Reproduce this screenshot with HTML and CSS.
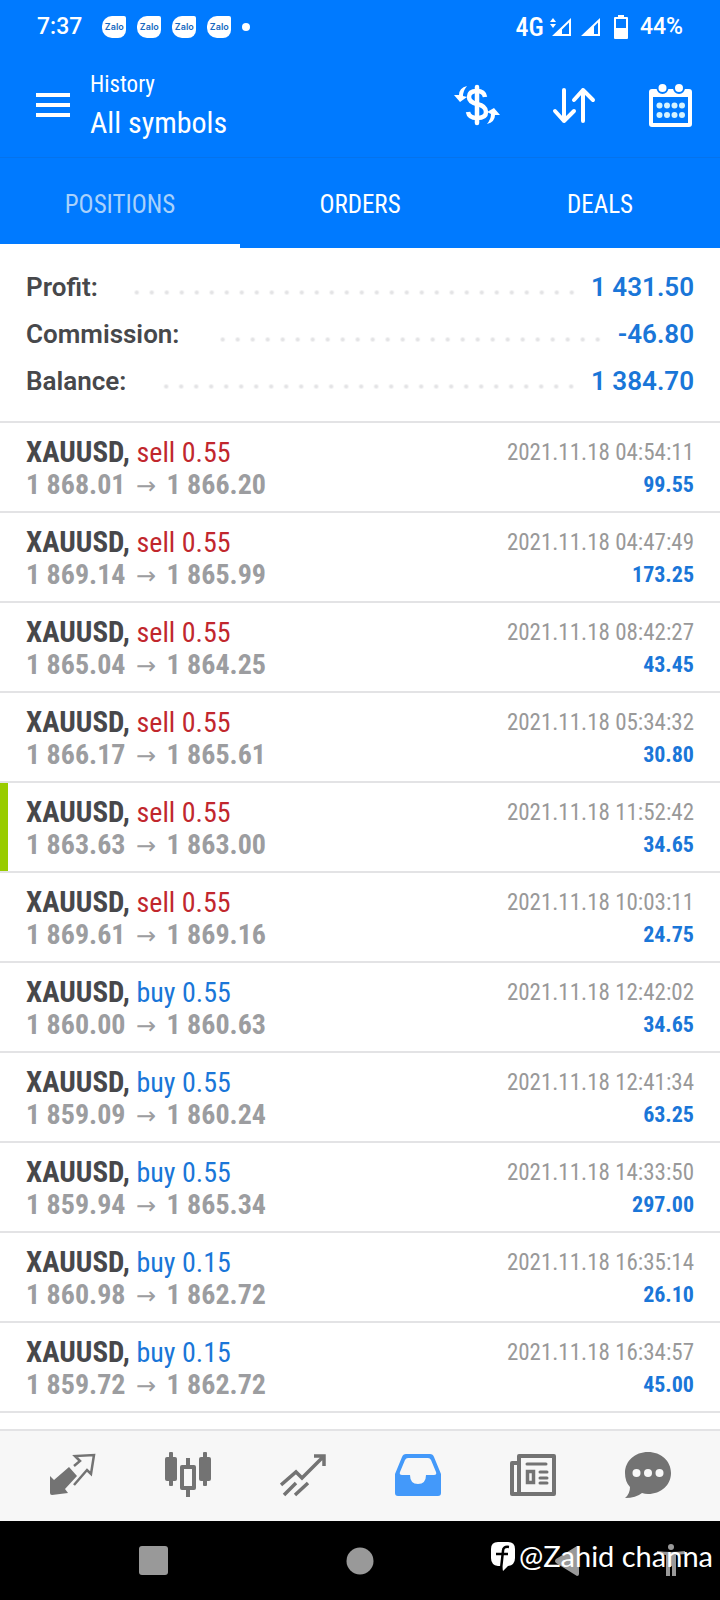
FILE: index.html
```html
<!DOCTYPE html>
<html lang="en">
<head>
<meta charset="utf-8">
<meta name="viewport" content="width=device-width, initial-scale=1">
<title>History</title>
<link rel="stylesheet" href="styles.css">
</head>
<body>
<div class="app">
  <header class="header">
    <div class="status">
      <span class="clock">7:37</span>
      <span class="zalo">Zalo</span>
      <span class="zalo">Zalo</span>
      <span class="zalo">Zalo</span>
      <span class="zalo">Zalo</span>
      <span class="dot"></span>
      <span class="network">4G</span>
      <svg class="signal" width="22" height="20" viewBox="0 0 22 20" fill="#fff"><path d="M0 5l3-4 3 4zM0 7l3 4 3-4z"/><path d="M21 1v18H2zM19 5.500L12 12.500V17h7z" fill-rule="evenodd"/></svg>
      <svg class="signal-two" width="20" height="20" viewBox="0 0 20 20" fill="#fff"><path d="M19 1v18H0zM17 5.500L13 9.500V17h4z" fill-rule="evenodd"/></svg>
      <svg class="battery" width="16" height="26" viewBox="0 0 16 26" fill="#fff"><path d="M5 1h6v2h3q1 0 1 1v20q0 1-1 1H2q-1 0-1-1V4q0-1 1-1h3zM3 5v9h10V5z" fill-rule="evenodd"/></svg>
      <span class="charge">44%</span>
    </div>
    <div class="toolbar">
      <button class="icon-button" aria-label="Menu">
        <svg width="34" height="24" viewBox="0 0 34 24" fill="#fff"><path d="M0 0h34v4H0zM0 10h34v4H0zM0 20h34v4H0z"/></svg>
      </button>
      <div class="titles">
        <p class="kicker">History</p>
        <h1 class="title">All symbols</h1>
      </div>
      <div class="actions">
        <button class="icon-button" aria-label="Currency">
          <svg width="46" height="46" viewBox="0 0 46 46" fill="none" stroke="#fff" stroke-width="4.500">
            <path d="M31 15q-1-6-8-6-8 0-8 6 0 5 8 7 9 2 9 8 0 6-9 6-8 0-9-6" /><path d="M23 5v36" stroke-linecap="round"/>
            <path d="M13 4Q5 6 5 13L0 13l6 7 7-5-4-1q0-5 4-10zM33 42q8-2 8-9h5l-6-7-7 4 4 2q0 5-4 10z" fill="#fff" stroke="none"/>
          </svg>
        </button>
        <button class="icon-button" aria-label="Sort">
          <svg width="46" height="46" viewBox="0 0 46 46" fill="none" stroke="#fff" stroke-width="4" stroke-linecap="round" stroke-linejoin="round"><path d="M13 8v31M4 29l9 10 10-10M32 39V8M23 18L32 8l10 10"/></svg>
        </button>
        <button class="icon-button" aria-label="Choose period">
          <svg width="46" height="46" viewBox="0 0 46 46"><rect x="3" y="9" width="39" height="34" rx="1" fill="none" stroke="#fff" stroke-width="4"/><path d="M2 8h41v7H2z" fill="#fff"/><g fill="#fff" stroke="#007aff" stroke-width="2"><circle cx="14.500" cy="6" r="5"/><circle cx="31" cy="6" r="5"/></g><g fill="#d4f3ff"><circle cx="11.500" cy="23.500" r="3"/><circle cx="19" cy="23.500" r="3"/><circle cx="26.500" cy="23.500" r="3"/><circle cx="34" cy="23.500" r="3"/><circle cx="11.500" cy="33" r="3"/><circle cx="19" cy="33" r="3"/><circle cx="26.500" cy="33" r="3"/><circle cx="34" cy="33" r="3"/></g></svg>
        </button>
      </div>
    </div>
    <nav class="tabs">
      <button class="tab tab-active">POSITIONS</button>
      <button class="tab">ORDERS</button>
      <button class="tab">DEALS</button>
    </nav>
  </header>

  <main class="content">
    <dl class="summary">
      <div class="total"><dt>Profit:</dt><dd>1 431.50</dd></div>
      <div class="total"><dt>Commission:</dt><dd>-46.80</dd></div>
      <div class="total"><dt>Balance:</dt><dd>1 384.70</dd></div>
    </dl>
    <ul class="deals">
      <li class="deal"><div><p class="symbol">XAUUSD, <span class="sell">sell 0.55</span></p><p class="prices">1 868.01 <span class="arrow">→</span> 1 866.20</p></div><div class="result"><time>2021.11.18 04:54:11</time><p class="amount">99.55</p></div></li>
      <li class="deal"><div><p class="symbol">XAUUSD, <span class="sell">sell 0.55</span></p><p class="prices">1 869.14 <span class="arrow">→</span> 1 865.99</p></div><div class="result"><time>2021.11.18 04:47:49</time><p class="amount">173.25</p></div></li>
      <li class="deal"><div><p class="symbol">XAUUSD, <span class="sell">sell 0.55</span></p><p class="prices">1 865.04 <span class="arrow">→</span> 1 864.25</p></div><div class="result"><time>2021.11.18 08:42:27</time><p class="amount">43.45</p></div></li>
      <li class="deal"><div><p class="symbol">XAUUSD, <span class="sell">sell 0.55</span></p><p class="prices">1 866.17 <span class="arrow">→</span> 1 865.61</p></div><div class="result"><time>2021.11.18 05:34:32</time><p class="amount">30.80</p></div></li>
      <li class="deal deal-marked"><div><p class="symbol">XAUUSD, <span class="sell">sell 0.55</span></p><p class="prices">1 863.63 <span class="arrow">→</span> 1 863.00</p></div><div class="result"><time>2021.11.18 11:52:42</time><p class="amount">34.65</p></div></li>
      <li class="deal"><div><p class="symbol">XAUUSD, <span class="sell">sell 0.55</span></p><p class="prices">1 869.61 <span class="arrow">→</span> 1 869.16</p></div><div class="result"><time>2021.11.18 10:03:11</time><p class="amount">24.75</p></div></li>
      <li class="deal"><div><p class="symbol">XAUUSD, <span class="buy">buy 0.55</span></p><p class="prices">1 860.00 <span class="arrow">→</span> 1 860.63</p></div><div class="result"><time>2021.11.18 12:42:02</time><p class="amount">34.65</p></div></li>
      <li class="deal"><div><p class="symbol">XAUUSD, <span class="buy">buy 0.55</span></p><p class="prices">1 859.09 <span class="arrow">→</span> 1 860.24</p></div><div class="result"><time>2021.11.18 12:41:34</time><p class="amount">63.25</p></div></li>
      <li class="deal"><div><p class="symbol">XAUUSD, <span class="buy">buy 0.55</span></p><p class="prices">1 859.94 <span class="arrow">→</span> 1 865.34</p></div><div class="result"><time>2021.11.18 14:33:50</time><p class="amount">297.00</p></div></li>
      <li class="deal"><div><p class="symbol">XAUUSD, <span class="buy">buy 0.15</span></p><p class="prices">1 860.98 <span class="arrow">→</span> 1 862.72</p></div><div class="result"><time>2021.11.18 16:35:14</time><p class="amount">26.10</p></div></li>
      <li class="deal"><div><p class="symbol">XAUUSD, <span class="buy">buy 0.15</span></p><p class="prices">1 859.72 <span class="arrow">→</span> 1 862.72</p></div><div class="result"><time>2021.11.18 16:34:57</time><p class="amount">45.00</p></div></li>
    </ul>
  </main>

  <nav class="bottom-nav">
    <button class="icon-button" aria-label="Quotes"><svg width="46" height="46" viewBox="0 0 46 46"><path d="M19 15l8 9-12 13 3 4-16 2q-2 0-2-2V24l4 4z" fill="#737373"/><path d="M24 14l6-5-5-5 19-1-3 19-4-4-13 15" fill="none" stroke="#737373" stroke-width="2.500"/></svg></button>
    <button class="icon-button" aria-label="Charts"><svg width="46" height="46" viewBox="0 0 46 46" fill="#737373"><rect x="0" y="5" width="12" height="24" rx="2"/><rect x="4" y="0" width="4" height="34" rx="1"/><rect x="34" y="5" width="12" height="24" rx="2"/><rect x="38" y="0" width="4" height="34" rx="1"/><path d="M21 6h4v7h4q2 0 2 2v21q0 2-2 2h-4v7h-4v-7h-4q-2 0-2-2V15q0-2 2-2h4zM19 17v17h8V17z" fill-rule="evenodd"/></svg></button>
    <button class="icon-button" aria-label="Trade"><svg width="46" height="46" viewBox="0 0 46 46" fill="none" stroke="#737373" stroke-width="3.500"><path d="M1 33l15-13 6 6L43 5M34 4h10v10M4 43l12-12M15 43l13-12"/></svg></button>
    <button class="icon-button" aria-label="History" aria-current="page"><svg width="46" height="46" viewBox="0 0 46 46"><path d="M11 2h24q3 0 4 3l7 17v19q0 3-3 3H3q-3 0-3-3V22L7 5q1-3 4-3zM13 6q-2 0-3 2L5 20q-1 3 2 3h8q0 9 8 9t8-9h8q3 0 2-3L36 8q-1-2-3-2z" fill="#4399fa" fill-rule="evenodd"/></svg></button>
    <button class="icon-button" aria-label="News"><svg width="46" height="46" viewBox="0 0 46 46" fill="none" stroke="#737373" stroke-width="4"><path d="M9 4h35v38H9zM7 11H2v31h8" stroke-linejoin="round"/><path d="M17 12h19M30 20h7M30 26h7M30 31h7" stroke-width="3" stroke-linecap="round"/><rect x="17.500" y="19.500" width="6" height="11" stroke-width="3.500"/></svg></button>
    <button class="icon-button" aria-label="Messages"><svg width="46" height="46" viewBox="0 0 46 46"><path d="M23 0c13 0 23 9 23 21S36 42 23 42q-3 0-6-1-6 5-17 5 5-4 5-11Q0 30 0 21C0 9 10 0 23 0z" fill="#737373"/><g fill="#f7f7f7"><circle cx="11.500" cy="21" r="4"/><circle cx="23" cy="21" r="4"/><circle cx="34.500" cy="21" r="4"/></g></svg></button>
  </nav>

  <footer class="system-nav">
    <button class="icon-button" aria-label="Recent apps"><svg width="30" height="30" viewBox="0 0 30 30"><rect x="1" y="0" width="29" height="29" rx="3" fill="#999"/></svg></button>
    <button class="icon-button" aria-label="Home"><svg width="30" height="30" viewBox="0 0 30 30"><circle cx="15" cy="15" r="13.500" fill="#999"/></svg></button>
    <button class="icon-button" aria-label="Back"><svg width="30" height="30" viewBox="0 0 30 30"><path d="M25 0q2 0 2 2v26q0 2-2 2L4 17q-2-2 0-4z" fill="#999"/></svg></button>
    <button class="icon-button accessibility" aria-label="Accessibility"><svg width="28" height="34" viewBox="0 0 28 34" fill="#999"><circle cx="14" cy="4" r="3"/><path d="M0 8q14 2 28 0v3l-9 1v21h-4V23h-2v10H9V12l-9-1z"/></svg></button>
    <div class="watermark">
      <svg width="26" height="30" viewBox="0 0 26 30"><path d="M8 1h10q7 0 7 7v9q0 7-7 8l-5 5-1-5H8q-7-1-7-8V8q0-7 7-7z" fill="#fff"/><path d="M19 6q-6-1-6 4l-2 18M6 13h12" fill="none" stroke="#000" stroke-width="2.500"/></svg>
      <span>@Zahid channa</span>
    </div>
  </footer>
</div>
</body>
</html>
```
FILE: styles.css
```css
* { box-sizing: border-box; }
body, p, h1, dl, dd, ul { margin: 0; padding: 0; }
body {
  background: #fff;
  color: #47484b;
  font-family: "Roboto Condensed", Roboto, "Liberation Sans", sans-serif;
}
svg { display: block; }
button {
  margin: 0;
  padding: 0;
  border: 0;
  background: none;
  color: inherit;
  font: inherit;
}
.icon-button { display: grid; place-items: center; }

.app { display: flex; flex-direction: column; min-height: 100vh; }

.header { background: #007aff; color: #fff; }
.status {
  display: flex;
  align-items: center;
  height: 53px;
  padding: 0 37px;
  font: 500 23px/28px Roboto, sans-serif;
}
.clock { margin-right: 20px; }
.zalo {
  width: 24px;
  height: 22px;
  margin-right: 11px;
  border-radius: 10px 2px 8px 10px;
  background: #fff;
  color: #1769c0;
  font: 600 9px/22px Inter, sans-serif;
  text-align: center;
}
.dot { width: 8px; height: 8px; border-radius: 50%; background: #fff; }
.network {
  margin-left: auto;
  margin-right: 6px;
  font-family: "Roboto Condensed", Roboto, sans-serif;
  font-size: 26px;
}
.signal { margin-right: 9px; }
.signal-two { margin-right: 12px; }
.battery { margin-right: 11px; }

.toolbar {
  display: flex;
  align-items: center;
  height: 105px;
  padding: 0 26px 0 36px;
  border-bottom: 1px solid #0573ec;
}
.titles { margin-left: 20px; }
.kicker { font-size: 23px; line-height: 36px; }
.title { font-size: 30px; line-height: 40px; font-weight: 400; }
.actions { display: flex; gap: 51px; margin-left: auto; }

.tabs { display: grid; grid-template-columns: repeat(3, 1fr); height: 90px; }
.tab { padding-top: 6px; border-bottom: 4px solid transparent; font-size: 25px; }
.tab-active { border-color: #fff; color: #a9d1fb; }

.content { flex: 1; }
.summary {
  padding: 16px 26px 16px;
  border-bottom: 2px solid #e3e3e5;
  font: 600 26px/47px Roboto, sans-serif;
}
.total { display: flex; }
.total::after {
  content: "";
  order: 1;
  flex: 1;
  margin: 0 12px 0 32px;
  background: radial-gradient(circle, #e3e3e5 1px, transparent 3px) right 5px / 15px 47px repeat-x;
}
.total dd { order: 2; color: #1a76d8; }

.deals { list-style: none; }
.deal {
  display: flex;
  justify-content: space-between;
  padding: 13px 26px 10px;
  border-bottom: 2px solid #e3e3e5;
  line-height: 32px;
}
.deal-marked { box-shadow: inset 8px 0 #99cc00; }
.symbol { font-size: 29px; font-weight: 700; }
.sell, .buy { font-size: 28px; font-weight: 400; }
.sell { color: #c1272d; }
.buy { color: #1a76d8; }
.prices { color: #9c9da0; font-size: 28px; font-weight: 700; }
.arrow { margin: 0 4px; font: 400 24px/24px "DejaVu Sans", sans-serif; }
.result { padding-top: 1px; text-align: right; }
.result time { display: block; color: #999; font-size: 23px; }
.amount { color: #1a76d8; font-size: 22px; font-weight: 700; }

.bottom-nav {
  display: grid;
  grid-template-columns: repeat(6, 1fr);
  height: 92px;
  padding: 0 15px 3px;
  border-top: 2px solid #e3e3e5;
  background: #f7f7f7;
}
.system-nav {
  position: relative;
  display: grid;
  grid-template-columns: repeat(3, 207px);
  justify-content: center;
  height: 79px;
  background: #000;
}
.accessibility { position: absolute; right: 35px; top: 22px; }
.watermark {
  position: absolute;
  right: 7px;
  top: 17px;
  display: flex;
  align-items: center;
  gap: 3px;
  color: #fff;
  font: 400 29px/36px Lato, sans-serif;
}
```
